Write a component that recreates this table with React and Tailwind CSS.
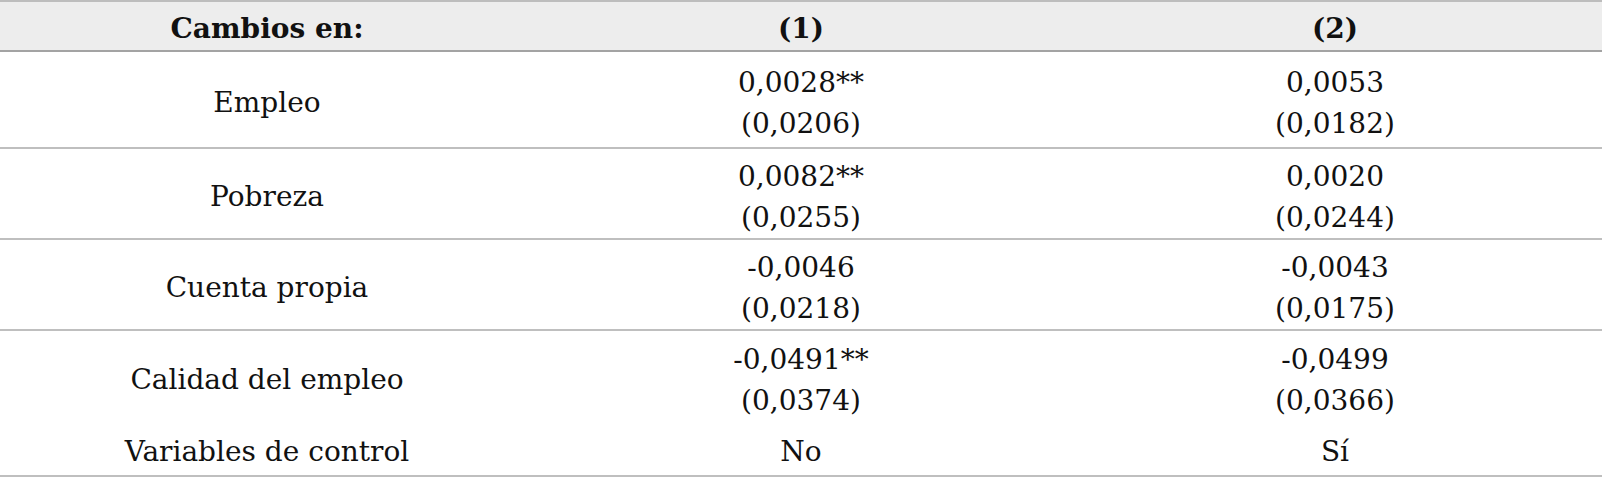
const rows = [
  { label: "Empleo", a: ["0,0028**", "(0,0206)"], b: ["0,0053", "(0,0182)"], h: "h-[97px]", line: true },
  { label: "Pobreza", a: ["0,0082**", "(0,0255)"], b: ["0,0020", "(0,0244)"], h: "h-[91px]", line: true },
  { label: "Cuenta propia", a: ["-0,0046", "(0,0218)"], b: ["-0,0043", "(0,0175)"], h: "h-[91px]", line: true },
  { label: "Calidad del empleo", a: ["-0,0491**", "(0,0374)"], b: ["-0,0499", "(0,0366)"], h: "h-[91px]", line: false },
  { label: "Variables de control", a: ["No"], b: ["Sí"], h: "h-[55px]", line: true },
];

function Cell({ lines }) {
  return (
    <div className="flex flex-col items-center justify-center">
      {lines.map((t) => (
        <span key={t}>{t}</span>
      ))}
    </div>
  );
}

export default function App() {
  return (
    <div className="w-[1602px] h-[477px] bg-white font-['DejaVu_Serif',serif] text-[28px] leading-[41px] text-[#111]">
      <div className="grid h-[52px] grid-cols-3 border-t-2 border-b-2 border-t-[#bdbdbd] border-b-[#a3a3a3] bg-[#ededed] pt-[4px] font-bold">
        <div className="flex items-center justify-center">Cambios en:</div>
        <div className="flex items-center justify-center">(1)</div>
        <div className="flex items-center justify-center">(2)</div>
      </div>
      {rows.map((r) => (
        <div
          key={r.label}
          className={`grid grid-cols-3 pt-[6px] ${r.h} ${r.line ? "border-b-2 border-[#bfbfbf]" : ""}`}
        >
          <div className="flex items-center justify-center">{r.label}</div>
          <Cell lines={r.a} />
          <Cell lines={r.b} />
        </div>
      ))}
    </div>
  );
}
